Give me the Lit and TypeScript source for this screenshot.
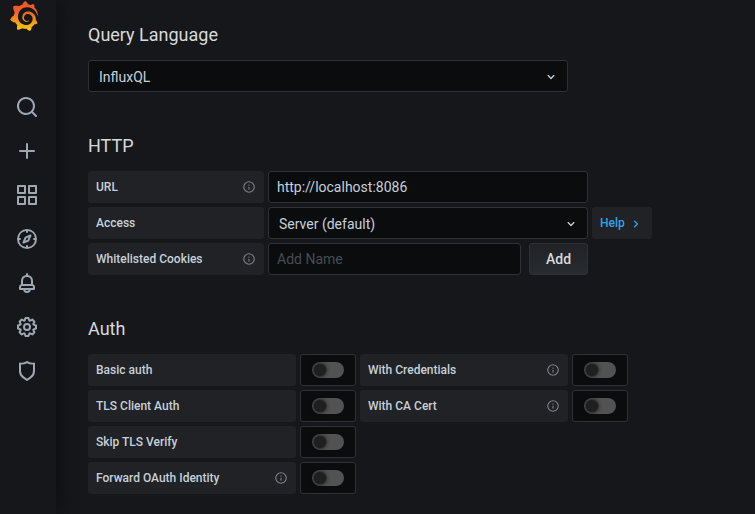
import { LitElement, html, css, svg, nothing } from "lit";
import { customElement, property } from "lit/decorators.js";

const ICONS: Record<string, string> = {
  search:
    "M21.71,20.29,18,16.61A9,9,0,1,0,16.61,18l3.68,3.68a1,1,0,0,0,1.42,0A1,1,0,0,0,21.71,20.29ZM11,18a7,7,0,1,1,7-7A7,7,0,0,1,11,18Z",
  plus: "M19,11H13V5a1,1,0,0,0-2,0v6H5a1,1,0,0,0,0,2h6v6a1,1,0,0,0,2,0V13h6a1,1,0,0,0,0-2Z",
  apps: "M10,13H3a1,1,0,0,0-1,1v7a1,1,0,0,0,1,1h7a1,1,0,0,0,1-1V14A1,1,0,0,0,10,13ZM9,20H4V15H9ZM21,2H14a1,1,0,0,0-1,1v7a1,1,0,0,0,1,1h7a1,1,0,0,0,1-1V3A1,1,0,0,0,21,2ZM20,9H15V4h5Zm1,4H14a1,1,0,0,0-1,1v7a1,1,0,0,0,1,1h7a1,1,0,0,0,1-1V14A1,1,0,0,0,21,13Zm-1,7H15V15h5ZM10,2H3A1,1,0,0,0,2,3v7a1,1,0,0,0,1,1h7a1,1,0,0,0,1-1V3A1,1,0,0,0,10,2ZM9,9H4V4H9Z",
  compass:
    "M12,2A10,10,0,1,0,22,12,10,10,0,0,0,12,2Zm1,17.93V19a1,1,0,0,0-2,0v.93A8,8,0,0,1,4.07,13H5a1,1,0,0,0,0-2H4.07A8,8,0,0,1,11,4.07V5a1,1,0,0,0,2,0V4.07A8,8,0,0,1,19.93,11H19a1,1,0,0,0,0,2h.93A8,8,0,0,1,13,19.93ZM15.14,7.55l-5,2.12a1,1,0,0,0-.52.52l-2.12,5a1,1,0,0,0,.21,1.1,1,1,0,0,0,.7.3.93.93,0,0,0,.4-.09l5-2.12a1,1,0,0,0,.52-.52l2.12-5a1,1,0,0,0-1.31-1.31Zm-2.49,5.1-2.28,1,1-2.28,2.28-1Z",
  bell: "M18,13.18V10a6,6,0,0,0-5-5.91V3a1,1,0,0,0-2,0V4.09A6,6,0,0,0,6,10v3.18A3,3,0,0,0,4,16v2a1,1,0,0,0,1,1H8.14a4,4,0,0,0,7.72,0H19a1,1,0,0,0,1-1V16A3,3,0,0,0,18,13.18ZM8,10a4,4,0,0,1,8,0v3H8Zm4,10a2,2,0,0,1-1.72-1h3.44A2,2,0,0,1,12,20Zm6-3H6V16a1,1,0,0,1,1-1H17a1,1,0,0,1,1,1Z",
  cog: "M21.32,9.55l-1.89-.63.89-1.78A1,1,0,0,0,20.13,6L18,3.87a1,1,0,0,0-1.15-.19l-1.78.89-.63-1.89A1,1,0,0,0,13.5,2h-3a1,1,0,0,0-.95.68L8.92,4.57,7.14,3.68A1,1,0,0,0,6,3.87L3.87,6a1,1,0,0,0-.19,1.15l.89,1.78-1.89.63A1,1,0,0,0,2,10.5v3a1,1,0,0,0,.68.95l1.89.63-.89,1.78A1,1,0,0,0,3.87,18L6,20.13a1,1,0,0,0,1.15.19l1.78-.89.63,1.89a1,1,0,0,0,.95.68h3a1,1,0,0,0,.95-.68l.63-1.89,1.78.89A1,1,0,0,0,18,20.13L20.13,18a1,1,0,0,0,.19-1.15l-.89-1.78,1.89-.63A1,1,0,0,0,22,13.5v-3A1,1,0,0,0,21.32,9.55ZM20,12.78l-1.2.4A2,2,0,0,0,17.64,16l.57,1.14-1.1,1.1L16,17.64a2,2,0,0,0-2.79,1.16l-.4,1.2H11.22l-.4-1.2A2,2,0,0,0,8,17.64l-1.14.57-1.1-1.1L6.36,16A2,2,0,0,0,5.2,13.18L4,12.78V11.22l1.2-.4A2,2,0,0,0,6.36,8L5.79,6.89l1.1-1.1L8,6.36A2,2,0,0,0,10.82,5.2l.4-1.2h1.56l.4,1.2A2,2,0,0,0,16,6.36l1.14-.57,1.1,1.1L17.64,8a2,2,0,0,0,1.16,2.79l1.2.4ZM12,8a4,4,0,1,0,4,4A4,4,0,0,0,12,8Zm0,6a2,2,0,1,1,2-2A2,2,0,0,1,12,14Z",
  shield:
    "M19.63,3.65a1,1,0,0,0-.84-.2,8,8,0,0,1-6.22-1.27,1,1,0,0,0-1.14,0A8,8,0,0,1,5.21,3.45a1,1,0,0,0-.84.2A1,1,0,0,0,4,4.43v7.45a9,9,0,0,0,3.77,7.33l3.65,2.6a1,1,0,0,0,1.16,0l3.65-2.6A9,9,0,0,0,20,11.88V4.43A1,1,0,0,0,19.63,3.65ZM18,11.88a7,7,0,0,1-2.93,5.7L12,19.77,8.93,17.58A7,7,0,0,1,6,11.88V5.58a10,10,0,0,0,6-1.39,10,10,0,0,0,6,1.39Z",
  info: "M12,2A10,10,0,1,0,22,12,10,10,0,0,0,12,2Zm0,18a8,8,0,1,1,8-8A8,8,0,0,1,12,20Zm0-8.5a1,1,0,0,0-1,1v3a1,1,0,0,0,2,0v-3A1,1,0,0,0,12,11.5Zm0-4a1.25,1.25,0,1,0,1.25,1.25A1.25,1.25,0,0,0,12,7.5Z",
  "angle-down":
    "M17,9.17a1,1,0,0,0-1.41,0L12,12.71,8.46,9.17a1,1,0,0,0-1.41,0,1,1,0,0,0,0,1.42l4.24,4.24a1,1,0,0,0,1.42,0L17,10.59A1,1,0,0,0,17,9.17Z",
  "angle-right":
    "M14.83,11.29,10.59,7.05a1,1,0,0,0-1.42,0,1,1,0,0,0,0,1.41L12.71,12,9.17,15.54a1,1,0,0,0,0,1.41,1,1,0,0,0,.71.29,1,1,0,0,0,.71-.29l4.24-4.24A1,1,0,0,0,14.83,11.29Z",
};

const LOGO =
  "M342,161.2c-0.6-6.1-1.6-13.1-3.6-20.9c-2-7.7-5-16.2-9.4-25c-4.4-8.8-10.1-17.9-17.5-26.8c-2.9-3.5-6.1-6.9-9.5-10.2c5.1-20.3-6.2-37.9-6.2-37.9c-19.5-1.2-31.9,6.1-36.5,9.4c-0.8-0.3-1.5-0.7-2.3-1c-3.3-1.3-6.7-2.6-10.3-3.7c-3.5-1.1-7.1-2.1-10.8-3c-3.7-0.9-7.4-1.6-11.2-2.2c-0.7-0.1-1.3-0.2-2-0.3c-8.5-27.2-32.9-38.6-32.9-38.6c-27.3,17.3-32.4,41.5-32.4,41.5s-0.1,0.5-0.3,1.4c-1.5,0.4-3,0.9-4.5,1.3c-2.1,0.6-4.2,1.4-6.2,2.2c-2.1,0.8-4.1,1.6-6.2,2.5c-4.1,1.8-8.2,3.8-12.2,6c-3.9,2.2-7.7,4.6-11.4,7.1c-0.5-0.2-1-0.4-1-0.4c-37.8-14.4-71.3,2.9-71.3,2.9c-3.1,40.2,15.1,65.5,18.7,70.1c-0.9,2.5-1.7,5-2.5,7.5c-2.8,9.1-4.9,18.4-6.2,28.1c-0.2,1.4-0.4,2.8-0.5,4.2C18.8,192.7,8.5,228,8.5,228c29.1,33.5,63.1,35.6,63.1,35.6c0,0,0.1-0.1,0.1-0.1c4.3,7.7,9.3,15,14.9,21.9c2.4,2.9,4.8,5.6,7.4,8.3c-10.6,30.4,1.5,55.6,1.5,55.6c32.4,1.2,53.7-14.2,58.2-17.7c3.2,1.1,6.5,2.1,9.8,2.9c10,2.6,20.2,4.1,30.4,4.5c2.5,0.1,5.1,0.2,7.6,0.1l1.2,0l0.8,0l1.6,0l1.6-0.1l0,0.1c15.3,21.8,42.1,24.9,42.1,24.9c19.1-20.1,20.2-40.1,20.2-44.4l0,0c0,0,0-0.1,0-0.3c0-0.4,0-0.6,0-0.6l0,0c0-0.3,0-0.6,0-0.9c4-2.8,7.8-5.8,11.4-9.1c7.6-6.9,14.3-14.8,19.9-23.3c0.5-0.8,1-1.6,1.5-2.4c21.6,1.2,36.9-13.4,36.9-13.4c-3.6-22.5-16.4-33.5-19.1-35.6l0,0c0,0-0.1-0.1-0.3-0.2c-0.2-0.1-0.2-0.2-0.2-0.2c0,0,0,0,0,0c-0.1-0.1-0.3-0.2-0.5-0.3c0.1-1.4,0.2-2.7,0.3-4.1c0.2-2.4,0.2-4.9,0.2-7.3l0-1.8l0-0.9l0-0.5c0-0.6,0-0.4,0-0.6l-0.1-1.5l-0.1-2c0-0.7-0.1-1.3-0.2-1.9c-0.1-0.6-0.1-1.3-0.2-1.9l-0.2-1.9l-0.3-1.9c-0.4-2.5-0.8-4.9-1.4-7.4c-2.3-9.7-6.1-18.9-11-27.2c-5-8.3-11.2-15.6-18.3-21.8c-7-6.2-14.9-11.2-23.1-14.9c-8.3-3.7-16.9-6.1-25.5-7.2c-4.3-0.6-8.6-0.8-12.9-0.7l-1.6,0l-0.4,0c-0.1,0-0.6,0-0.5,0l-0.7,0l-1.6,0.1c-0.6,0-1.2,0.1-1.7,0.1c-2.2,0.2-4.4,0.5-6.5,0.9c-8.6,1.6-16.7,4.7-23.8,9c-7.1,4.3-13.3,9.6-18.3,15.6c-5,6-8.9,12.7-11.6,19.6c-2.7,6.9-4.2,14.1-4.6,21c-0.1,1.7-0.1,3.5-0.1,5.2c0,0.4,0,0.9,0,1.3l0.1,1.4c0.1,0.8,0.1,1.7,0.2,2.5c0.3,3.5,1,6.9,1.9,10.1c1.9,6.5,4.9,12.4,8.6,17.4c3.7,5,8.2,9.1,12.9,12.4c4.7,3.2,9.8,5.5,14.8,7c5,1.5,10,2.1,14.7,2.1c0.6,0,1.2,0,1.7,0c0.3,0,0.6,0,0.9,0c0.3,0,0.6,0,0.9-0.1c0.5,0,1-0.1,1.5-0.1c0.1,0,0.3,0,0.4-0.1l0.5-0.1c0.3,0,0.6-0.1,0.9-0.1c0.6-0.1,1.1-0.2,1.7-0.3c0.6-0.1,1.1-0.2,1.6-0.4c1.1-0.2,2.1-0.6,3.1-0.9c2-0.7,4-1.5,5.7-2.4c1.8-0.9,3.4-2,5-3c0.4-0.3,0.9-0.6,1.3-1c1.6-1.3,1.9-3.7,0.6-5.3c-1.1-1.4-3.1-1.8-4.7-0.9c-0.4,0.2-0.8,0.4-1.2,0.6c-1.4,0.7-2.8,1.3-4.3,1.8c-1.5,0.5-3.1,0.9-4.7,1.2c-0.8,0.1-1.6,0.2-2.5,0.3c-0.4,0-0.8,0.1-1.3,0.1c-0.4,0-0.9,0-1.2,0c-0.4,0-0.8,0-1.2,0c-0.5,0-1,0-1.5-0.1c0,0-0.3,0-0.1,0l-0.2,0l-0.3,0c-0.2,0-0.5,0-0.7-0.1c-0.5-0.1-0.9-0.1-1.4-0.2c-3.7-0.5-7.4-1.6-10.9-3.2c-3.6-1.6-7-3.8-10.1-6.6c-3.1-2.8-5.8-6.1-7.9-9.9c-2.1-3.8-3.6-8-4.3-12.4c-0.3-2.2-0.5-4.5-0.4-6.7c0-0.6,0.1-1.2,0.1-1.8c0,0.2,0-0.1,0-0.1l0-0.2l0-0.5c0-0.3,0.1-0.6,0.1-0.9c0.1-1.2,0.3-2.4,0.5-3.6c1.7-9.6,6.5-19,13.9-26.1c1.9-1.8,3.9-3.4,6-4.9c2.1-1.5,4.4-2.8,6.8-3.9c2.4-1.1,4.8-2,7.4-2.7c2.5-0.7,5.1-1.1,7.8-1.4c1.3-0.1,2.6-0.2,4-0.2c0.4,0,0.6,0,0.9,0l1.1,0l0.7,0c0.3,0,0,0,0.1,0l0.3,0l1.1,0.1c2.9,0.2,5.7,0.6,8.5,1.3c5.6,1.2,11.1,3.3,16.2,6.1c10.2,5.7,18.9,14.5,24.2,25.1c2.7,5.3,4.6,11,5.5,16.9c0.2,1.5,0.4,3,0.5,4.5l0.1,1.1l0.1,1.1c0,0.4,0,0.8,0,1.1c0,0.4,0,0.8,0,1.1l0,1l0,1.1c0,0.7-0.1,1.9-0.1,2.6c-0.1,1.6-0.3,3.3-0.5,4.9c-0.2,1.6-0.5,3.2-0.8,4.8c-0.3,1.6-0.7,3.2-1.1,4.7c-0.8,3.1-1.8,6.2-3,9.3c-2.4,6-5.6,11.8-9.4,17.1c-7.7,10.6-18.2,19.2-30.2,24.7c-6,2.7-12.3,4.7-18.8,5.7c-3.2,0.6-6.5,0.9-9.8,1l-0.6,0l-0.5,0l-1.1,0l-1.6,0l-0.8,0c0.4,0-0.1,0-0.1,0l-0.3,0c-1.8,0-3.5-0.1-5.3-0.3c-7-0.5-13.9-1.8-20.7-3.7c-6.7-1.9-13.2-4.6-19.4-7.8c-12.3-6.6-23.4-15.6-32-26.5c-4.3-5.4-8.1-11.3-11.2-17.4c-3.1-6.1-5.6-12.6-7.4-19.1c-1.8-6.6-2.9-13.3-3.4-20.1l-0.1-1.3l0-0.3l0-0.3l0-0.6l0-1.1l0-0.3l0-0.4l0-0.8l0-1.6l0-0.3c0,0,0,0.1,0-0.1l0-0.6c0-0.8,0-1.7,0-2.5c0.1-3.3,0.4-6.8,0.8-10.2c0.4-3.4,1-6.9,1.7-10.3c0.7-3.4,1.5-6.8,2.5-10.2c1.9-6.7,4.3-13.2,7.1-19.3c5.7-12.2,13.1-23.1,22-31.8c2.2-2.2,4.5-4.2,6.9-6.2c2.4-1.9,4.9-3.7,7.5-5.4c2.5-1.7,5.2-3.2,7.9-4.6c1.3-0.7,2.7-1.4,4.1-2c0.7-0.3,1.4-0.6,2.1-0.9c0.7-0.3,1.4-0.6,2.1-0.9c2.8-1.2,5.7-2.2,8.7-3.1c0.7-0.2,1.5-0.4,2.2-0.7c0.7-0.2,1.5-0.4,2.2-0.6c1.5-0.4,3-0.8,4.5-1.1c0.7-0.2,1.5-0.3,2.3-0.5c0.8-0.2,1.5-0.3,2.3-0.5c0.8-0.1,1.5-0.3,2.3-0.4l1.1-0.2l1.2-0.2c0.8-0.1,1.5-0.2,2.3-0.3c0.9-0.1,1.7-0.2,2.6-0.3c0.7-0.1,1.9-0.2,2.6-0.3c0.5-0.1,1.1-0.1,1.6-0.2l1.1-0.1l0.5-0.1l0.6,0c0.9-0.1,1.7-0.1,2.6-0.2l1.3-0.1c0,0,0.5,0,0.1,0l0.3,0l0.6,0c0.7,0,1.5-0.1,2.2-0.1c2.9-0.1,5.9-0.1,8.8,0c5.8,0.2,11.5,0.9,17,1.9c11.1,2.1,21.5,5.6,31,10.3c9.5,4.6,17.9,10.3,25.3,16.5c0.5,0.4,0.9,0.8,1.4,1.2c0.4,0.4,0.9,0.8,1.3,1.2c0.9,0.8,1.7,1.6,2.6,2.4c0.9,0.8,1.7,1.6,2.5,2.4c0.8,0.8,1.6,1.6,2.4,2.5c3.1,3.3,6,6.6,8.6,10c5.2,6.7,9.4,13.5,12.7,19.9c0.2,0.4,0.4,0.8,0.6,1.2c0.2,0.4,0.4,0.8,0.6,1.2c0.4,0.8,0.8,1.6,1.1,2.4c0.4,0.8,0.7,1.5,1.1,2.3c0.3,0.8,0.7,1.5,1,2.3c1.2,3,2.4,5.9,3.3,8.6c1.5,4.4,2.6,8.3,3.5,11.7c0.3,1.4,1.6,2.3,3,2.1c1.5-0.1,2.6-1.3,2.6-2.8C342.6,170.4,342.5,166.1,342,161.2z";

@customElement("ui-icon")
export class UiIcon extends LitElement {
  @property() name = "";
  static styles = css`
    :host {
      display: block;
      flex: none;
      width: 16px;
      height: 16px;
    }
    svg {
      display: block;
      width: 100%;
      height: 100%;
      fill: currentColor;
    }
  `;
  render() {
    return html`<svg viewBox="0 0 24 24">${svg`<path d=${ICONS[this.name] ?? ""}></path>`}</svg>`;
  }
}

@customElement("form-label")
export class FormLabel extends LitElement {
  @property() text = "";
  @property({ type: Boolean }) info = false;
  static styles = css`
    :host {
      display: flex;
      flex: none;
      align-items: center;
      justify-content: space-between;
      box-sizing: border-box;
      height: 32px;
      padding: 0 8px;
      border-radius: 3px;
      background: #202226;
      color: #c7d0d9;
      font-size: 12px;
      font-weight: 500;
      white-space: nowrap;
    }
    .info {
      width: 14px;
      height: 14px;
      color: #7b8087;
    }
  `;
  render() {
    return html`<span>${this.text}</span>${this.info
        ? html`<ui-icon class="info" name="info"></ui-icon>`
        : nothing}`;
  }
}

@customElement("form-switch")
export class FormSwitch extends LitElement {
  static styles = css`
    :host {
      display: flex;
      flex: none;
      align-items: center;
      justify-content: center;
      box-sizing: border-box;
      width: 56px;
      height: 32px;
      border: 1px solid #2c3235;
      border-radius: 3px;
      background: #0b0c0e;
    }
    .track {
      display: flex;
      align-items: center;
      box-sizing: border-box;
      width: 32px;
      height: 16px;
      padding-left: 2px;
      border-radius: 8px;
      background: #525252;
    }
    .knob {
      width: 12px;
      height: 12px;
      border-radius: 50%;
      background: #1f1f20;
      box-shadow: 0 0 4px #000000;
    }
  `;
  render() {
    return html`<div class="track"><div class="knob"></div></div>`;
  }
}

interface Toggle {
  text: string;
  info?: boolean;
}

const NAV = ["search", "plus", "apps", "compass", "bell", "cog", "shield"];

const AUTH: Toggle[][] = [
  [{ text: "Basic auth" }, { text: "With Credentials", info: true }],
  [{ text: "TLS Client Auth" }, { text: "With CA Cert", info: true }],
  [{ text: "Skip TLS Verify" }],
  [{ text: "Forward OAuth Identity", info: true }],
];

@customElement("app-root")
export class AppRoot extends LitElement {
  static styles = css`
    :host {
      display: flex;
      box-sizing: border-box;
      height: 100vh;
      overflow: hidden;
      background: #16171b;
      color: #c7d0d9;
      font-family: Roboto, "Liberation Sans", sans-serif;
      font-size: 14px;
      line-height: 20px;
    }
    .sidebar {
      display: flex;
      flex: none;
      flex-direction: column;
      width: 56px;
      background: #16171b;
      box-shadow: 0 0 20px #0b0c0e;
    }
    .logo {
      display: block;
      width: 30px;
      height: 30px;
      margin: 1px 0 0 9px;
    }
    .nav {
      display: flex;
      flex-direction: column;
      gap: 20px;
      margin: 64px 0 0 15px;
      color: #9fa7b3;
    }
    .nav ui-icon {
      width: 24px;
      height: 24px;
    }
    .content {
      flex: 1;
      padding: 24px 0 0 32px;
    }
    h3 {
      margin: 0 0 14px;
      font-size: 18px;
      font-weight: 400;
      line-height: 22px;
      color: #d8d9da;
    }
    section {
      margin-bottom: 43px;
    }
    .rows {
      display: flex;
      flex-direction: column;
      gap: 4px;
    }
    .row {
      display: flex;
      gap: 4px;
    }
    .field {
      display: flex;
      align-items: center;
      justify-content: space-between;
      box-sizing: border-box;
      width: 320px;
      height: 32px;
      padding: 0 8px;
      border: 1px solid #2c3235;
      border-radius: 3px;
      background: #0b0c0e;
    }
    .select {
      padding: 2px 8px 0 10px;
    }
    .wide {
      width: 480px;
    }
    .cookie {
      width: 253px;
      color: #464c54;
    }
    .http-label {
      width: 176px;
    }
    .auth-label {
      width: 208px;
    }
    .help {
      display: flex;
      align-items: center;
      gap: 3px;
      box-sizing: border-box;
      width: 60px;
      height: 32px;
      padding: 0 8px;
      border-radius: 3px;
      background: #202226;
      color: #33a2e5;
      font-size: 12px;
      font-weight: 500;
    }
    .help ui-icon {
      margin-top: 2px;
    }
    .add {
      box-sizing: border-box;
      width: 59px;
      height: 32px;
      margin-left: 4px;
      padding: 0;
      border: 1px solid #2c3235;
      border-radius: 3px;
      background: linear-gradient(180deg, #202226 0%, #2c3235 100%);
      background: linear-gradient(180deg, #202226 0%, #282b2f 100%);
      color: #d8d9da;
      font: 500 14px/30px Roboto, "Liberation Sans", sans-serif;
    }
  `;

  render() {
    return html`
      <div class="sidebar">
        <svg class="logo" viewBox="0 0 351 365">
          <defs>
            <linearGradient id="flame" gradientUnits="userSpaceOnUse" x1="175.5" y1="445.5" x2="175.5" y2="114">
              <stop offset="0" stop-color="#fff100"></stop>
              <stop offset="1" stop-color="#f05a28"></stop>
            </linearGradient>
          </defs>
          <path fill="url(#flame)" d=${LOGO}></path>
        </svg>
        <div class="nav">${NAV.map((n) => html`<ui-icon name=${n}></ui-icon>`)}</div>
      </div>
      <div class="content">
        <section>
          <h3>Query Language</h3>
          <div class="field select wide"><span>InfluxQL</span><ui-icon name="angle-down"></ui-icon></div>
        </section>
        <section>
          <h3>HTTP</h3>
          <div class="rows">
            <div class="row">
              <form-label class="http-label" text="URL" info></form-label>
              <div class="field">http://localhost:8086</div>
            </div>
            <div class="row">
              <form-label class="http-label" text="Access"></form-label>
              <div class="field select"><span>Server (default)</span><ui-icon name="angle-down"></ui-icon></div>
              <div class="help"><span>Help</span><ui-icon name="angle-right"></ui-icon></div>
            </div>
            <div class="row">
              <form-label class="http-label" text="Whitelisted Cookies" info></form-label>
              <div class="field cookie">Add Name</div>
              <button class="add">Add</button>
            </div>
          </div>
        </section>
        <section>
          <h3>Auth</h3>
          <div class="rows">
            ${AUTH.map(
              (row) => html`<div class="row">
                ${row.map(
                  (t) => html`<form-label class="auth-label" text=${t.text} ?info=${t.info}></form-label>
                    <form-switch></form-switch>`
                )}
              </div>`
            )}
          </div>
        </section>
      </div>
    `;
  }
}
